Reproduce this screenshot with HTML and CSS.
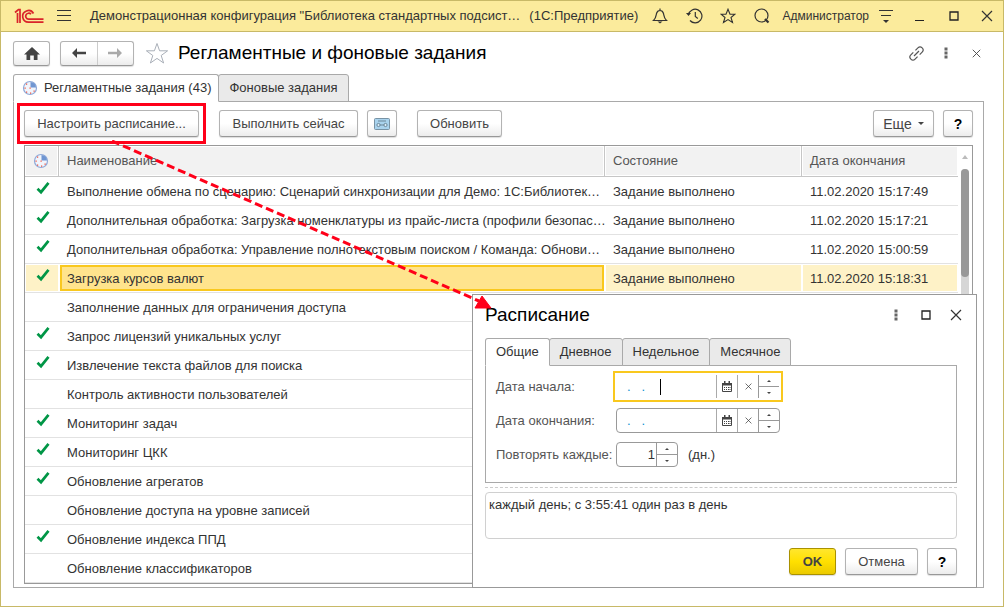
FILE: index.html
```html
<!DOCTYPE html>
<html lang="ru">
<head>
<meta charset="utf-8">
<title>Регламентные и фоновые задания</title>
<link rel="stylesheet" href="styles.css">
</head>
<body>
<svg class="defs" aria-hidden="true">
  <symbol id="check" viewBox="0 0 14 14"><path d="M1.5 7.8 5 11.2 12.5 1.8" fill="none" stroke="#009646" stroke-width="2.7"/></symbol>
  <symbol id="clock" viewBox="0 0 16 16"><circle cx="8" cy="8" r="6.5" fill="#f1f5fc" stroke="#8fa9d8" stroke-width="1.2"/><path d="M8.500 7.500V2a5.500 5.500 0 0 1 5.500 5.500z" fill="#7096d2"/><path d="M4 3.500h1.200v1.200H4zM2.500 7.500h1.200v1.200H2.500zM4 11.500h1.200v1.200H4zM8 12.500h1.200v1.200H8zM11.500 10.500h1.200v1.200h-1.200zM7.500 7.500h1.200v1.200H7.500z" fill="#f0503c"/></symbol>
  <symbol id="calendar" viewBox="0 0 10 11"><path d="M.5 2.500h9v8h-9z" fill="#fff" stroke="#444"/><path d="M0 2h10v2.500H0zM2 0h1.500v2H2zM6.500 0H8v2H6.500z" fill="#444"/><path d="M2 6h1v1H2zM4 6h1v1H4zM6 6h1v1H6zM2 8h1v1H2zM4 8h1v1H4zM6 8h1v1H6zM7.500 6h1v1h-1zM7.500 8h1v1h-1z" fill="#444"/></symbol>
  <symbol id="cross" viewBox="0 0 12 12"><path d="M1 1 11 11M11 1 1 11" fill="none" stroke="currentColor" stroke-width="1.200"/></symbol>
  <symbol id="dots" viewBox="0 0 4 12"><path d="M.5.5h3v3h-3zM.5 4.500h3v3h-3zM.5 8.500h3v3h-3z" fill="#666"/></symbol>
  <symbol id="square" viewBox="0 0 10 10"><path d="M1 1h8v8H1z" fill="none" stroke="#222" stroke-width="1.300"/></symbol>
</svg>
<div class="window">
  <header class="titlebar">
    <svg class="logo" viewBox="0 0 30 16" role="img" aria-label="1С"><g fill="none" stroke="#d9232a" stroke-width="1.700"><path d="M1 4.500 4.500 1.500H6V15M3.500 5V15"/><path d="M19.500 5.500A5.800 5.800 0 1 0 14.500 14.200H29.500"/><path d="M17 6.300A3 3 0 1 0 14.500 11.200H29.500"/></g></svg>
    <button class="tb-btn" aria-label="Меню"><svg width="14" height="12" viewBox="0 0 14 12"><path d="M0 .5h14M0 5.500h14M0 10.500h14" stroke="#333"/></svg></button>
    <div class="app-title"><span>Демонстрационная конфигурация "Библиотека стандартных подсист…</span><span>(1С:Предприятие)</span></div>
    <button class="tb-btn" aria-label="Уведомления"><svg width="16" height="16" viewBox="0 0 16 16"><path d="M1.500 12.500C4 10.500 4 8 4.500 5.500 5 3.500 6.500 2.500 8 2.500s3 1 3.500 3c.5 2.500.5 5 3 7zM8 .5v2" fill="none" stroke="#333" stroke-width="1.200"/><path d="M5.500 13.500h5l-2.500 2z" fill="#333"/></svg></button>
    <button class="tb-btn" aria-label="История"><svg width="17" height="16" viewBox="0 0 17 16"><path d="M2.500 6.500A6.800 6.800 0 1 1 4 12.500M9.300 4v4.500l2.500 2" fill="none" stroke="#333" stroke-width="1.200"/><path d="M0 5h5L2.500 8z" fill="#333"/></svg></button>
    <button class="tb-btn" aria-label="Избранное"><svg width="16" height="16" viewBox="0 0 16 16"><path d="M8 1.200 10 6.200h5l-4 3.300 1.500 5L8 11.600l-4.500 2.900 1.500-5-4-3.300h5z" fill="none" stroke="#333" stroke-width="1.100"/></svg></button>
    <button class="tb-btn" aria-label="Поиск"><svg width="16" height="16" viewBox="0 0 16 16"><circle cx="7.500" cy="7.500" r="6.500" fill="none" stroke="#333" stroke-width="1.200"/><path d="m11 11 3.500 3.500" stroke="#333" stroke-width="2.200"/></svg></button>
    <span class="user">Администратор</span>
    <button class="tb-btn" aria-label="Настройки"><svg width="14" height="14" viewBox="0 0 14 14"><path d="M0 1.500h14M2 6.500h10" stroke="#333"/><path d="M4 11h6l-3 3z" fill="#333"/></svg></button>
    <button class="tb-btn" aria-label="Свернуть"><svg width="10" height="10" viewBox="0 0 10 10"><path d="M0 9.500h9" stroke="#222"/></svg></button>
    <button class="tb-btn" aria-label="Развернуть"><svg width="10" height="10"><use href="#square"/></svg></button>
    <button class="tb-btn last" aria-label="Закрыть"><svg width="12" height="12"><use href="#cross"/></svg></button>
  </header>

  <div class="form-head">
    <button class="btn home" aria-label="Домой"><svg width="16" height="13" viewBox="0 0 16 13"><path d="M8 0 16 7.500H13.500V13H9.800V8.500H6.200V13H2.500V7.500H0z" fill="#444"/></svg></button>
    <div class="nav">
      <button aria-label="Назад"><svg width="14" height="10" viewBox="0 0 14 10"><path d="M0 5 5 0v3.700h9v2.600H5V10z" fill="#444"/></svg></button>
      <button aria-label="Вперед"><svg width="14" height="10" viewBox="0 0 14 10"><path d="M14 5 9 0v3.700H0v2.600h9V10z" fill="#aaa"/></svg></button>
    </div>
    <button class="plain star" aria-label="В избранное"><svg width="24" height="23" viewBox="0 0 24 23"><path d="m12 1.500 2.600 7.300h8L16.200 13.500l2.400 7.500-6.600-4.600L5.400 21l2.400-7.500L1.400 8.800h8z" fill="#fff" stroke="#a9afb8"/></svg></button>
    <h1>Регламентные и фоновые задания</h1>
    <div class="head-tools">
      <button class="plain" aria-label="Ссылка"><svg width="17" height="17" viewBox="0 0 17 17"><g transform="rotate(-45 8.500 8.500)" fill="none" stroke="#555" stroke-width="1.200"><path d="M7 5.500H3.500a3 3 0 0 0 0 6H7M10 5.500h3.500a3 3 0 0 1 0 6H10M5 8.500h7" /></g></svg></button>
      <button class="plain" aria-label="Еще"><svg width="4" height="12"><use href="#dots"/></svg></button>
      <button class="plain" aria-label="Закрыть форму"><svg width="9" height="9"><use href="#cross"/></svg></button>
    </div>
  </div>

  <main class="content">
    <div class="tabs" role="tablist">
      <button class="tab active" role="tab" aria-selected="true"><svg width="16" height="16"><use href="#clock"/></svg>Регламентные задания (43)</button>
      <button class="tab" role="tab" aria-selected="false">Фоновые задания</button>
    </div>
    <section class="panel">
      <div class="toolbar">
        <button class="btn marked">Настроить расписание...</button>
        <button class="btn run">Выполнить сейчас</button>
        <button class="btn icon" aria-label="Журнал"><svg width="16" height="12" viewBox="0 0 16 12"><rect x=".5" y=".5" width="15" height="11" rx="1" fill="#a9d3ee" stroke="#7893a5"/><path d="M4 2.500h8v1H4z" fill="#6b8799"/><path d="M5 7h6" stroke="#6b8799"/><circle cx="4.500" cy="7" r="1.600" fill="#dceffa" stroke="#6b8799"/><circle cx="11.500" cy="7" r="1.600" fill="#dceffa" stroke="#6b8799"/></svg></button>
        <button class="btn refresh">Обновить</button>
        <button class="btn more">Еще<i class="caret"></i></button>
        <button class="btn help">?</button>
      </div>
      <div class="grid">
        <table class="jobs">
          <colgroup><col class="c-mark"><col><col class="c-state"><col class="c-date"></colgroup>
          <thead><tr><th><svg width="16" height="16" role="img" aria-label="Статус"><use href="#clock"/></svg></th><th>Наименование</th><th>Состояние</th><th>Дата окончания</th></tr></thead>
          <tbody>
            <tr><td><svg><use href="#check"/></svg></td><td>Выполнение обмена по сценарию: Сценарий синхронизации для Демо: 1С:Библиотек…</td><td>Задание выполнено</td><td>11.02.2020 15:17:49</td></tr>
            <tr><td><svg><use href="#check"/></svg></td><td>Дополнительная обработка: Загрузка номенклатуры из прайс-листа (профили безопас…</td><td>Задание выполнено</td><td>11.02.2020 15:17:21</td></tr>
            <tr><td><svg><use href="#check"/></svg></td><td>Дополнительная обработка: Управление полнотекстовым поиском / Команда: Обнови…</td><td>Задание выполнено</td><td>11.02.2020 15:00:59</td></tr>
            <tr class="selected"><td><svg><use href="#check"/></svg></td><td>Загрузка курсов валют</td><td>Задание выполнено</td><td>11.02.2020 15:18:31</td></tr>
            <tr><td></td><td>Заполнение данных для ограничения доступа</td><td></td><td></td></tr>
            <tr><td><svg><use href="#check"/></svg></td><td>Запрос лицензий уникальных услуг</td><td></td><td></td></tr>
            <tr><td><svg><use href="#check"/></svg></td><td>Извлечение текста файлов для поиска</td><td></td><td></td></tr>
            <tr><td></td><td>Контроль активности пользователей</td><td></td><td></td></tr>
            <tr><td><svg><use href="#check"/></svg></td><td>Мониторинг задач</td><td></td><td></td></tr>
            <tr><td><svg><use href="#check"/></svg></td><td>Мониторинг ЦКК</td><td></td><td></td></tr>
            <tr><td><svg><use href="#check"/></svg></td><td>Обновление агрегатов</td><td></td><td></td></tr>
            <tr><td></td><td>Обновление доступа на уровне записей</td><td></td><td></td></tr>
            <tr><td><svg><use href="#check"/></svg></td><td>Обновление индекса ППД</td><td></td><td></td></tr>
            <tr><td></td><td>Обновление классификаторов</td><td></td><td></td></tr>
          </tbody>
        </table>
        <div class="scroll"><i class="scroll-up"></i><div class="track"><div class="thumb"></div></div></div>
      </div>
    </section>
  </main>

  <div class="dialog" role="dialog" aria-labelledby="dlg-title">
    <div class="dlg-head">
      <h2 id="dlg-title">Расписание</h2>
      <button class="plain" aria-label="Еще"><svg width="4" height="12"><use href="#dots"/></svg></button>
      <button class="plain" aria-label="Развернуть окно"><svg width="10" height="10"><use href="#square"/></svg></button>
      <button class="plain" aria-label="Закрыть окно"><svg width="12" height="12"><use href="#cross"/></svg></button>
    </div>
    <div class="tabs" role="tablist">
      <button class="tab active" role="tab" aria-selected="true">Общие</button>
      <button class="tab" role="tab" aria-selected="false">Дневное</button>
      <button class="tab" role="tab" aria-selected="false">Недельное</button>
      <button class="tab" role="tab" aria-selected="false">Месячное</button>
    </div>
    <div class="fields">
      <label for="start">Дата начала:</label>
      <div class="field focused"><input class="date" id="start" type="text" value=".   ."><span class="cursor"></span>
        <button aria-label="Календарь"><svg width="10" height="11"><use href="#calendar"/></svg></button><button aria-label="Очистить"><svg width="7" height="7"><use href="#cross"/></svg></button>
        <div class="spin"><button aria-label="Больше"><i class="up"></i></button><button aria-label="Меньше"><i class="down"></i></button></div></div>
      <label for="end">Дата окончания:</label>
      <div class="field"><input class="date" id="end" type="text" value=".   .">
        <button aria-label="Календарь"><svg width="10" height="11"><use href="#calendar"/></svg></button><button aria-label="Очистить"><svg width="7" height="7"><use href="#cross"/></svg></button>
        <div class="spin"><button aria-label="Больше"><i class="up"></i></button><button aria-label="Меньше"><i class="down"></i></button></div></div>
      <label for="every">Повторять каждые:</label>
      <div class="with-unit"><div class="field short"><input class="num" id="every" type="text" value="1">
        <div class="spin"><button aria-label="Больше"><i class="up"></i></button><button aria-label="Меньше"><i class="down"></i></button></div></div><span>(дн.)</span></div>
    </div>
    <hr class="divider">
    <textarea class="summary" aria-label="Описание расписания" readonly>каждый день; с 3:55:41 один раз в день</textarea>
    <div class="dlg-foot">
      <button class="btn ok">OK</button>
      <button class="btn cancel">Отмена</button>
      <button class="btn help">?</button>
    </div>
  </div>

  <svg class="arrow" viewBox="0 0 382 170" aria-hidden="true"><path d="M1 1 368 161" stroke="#ff0019" stroke-width="3" stroke-dasharray="8 4" fill="none"/><path d="M371 156 380 168 364 168z" fill="#ff0019" stroke="#ff0019"/></svg>
</div>
</body>
</html>
```

FILE: styles.css
```css
* { box-sizing: border-box; }
body { margin: 0; font-family: "Liberation Sans", Arial, sans-serif; font-size: 13px; line-height: 16px; color: #333; }
button, input, textarea { font: inherit; color: inherit; margin: 0; }
button { padding: 0; border: 0; background: none; }
svg { display: block; flex: none; }
.defs { position: absolute; width: 0; height: 0; }

.window { position: relative; display: flex; flex-direction: column; min-height: 100vh; background: #fff; border: 1px solid #c8b967; }

.titlebar { display: flex; align-items: center; height: 31px; padding-left: 13px; background: #fbeb9c; border-bottom: 1px solid #c8b967; }
.logo { width: 30px; height: 16px; margin-right: 3px; }
.tb-btn { display: flex; align-items: center; justify-content: center; width: 34px; height: 30px; flex: none; }
.tb-btn.last { width: 32px; }
.app-title { display: flex; flex: 1; gap: 9px; min-width: 0; padding-left: 9px; white-space: nowrap; }
.user { padding: 0 0 0 3px; font-size: 12px; }

.form-head { display: flex; align-items: center; height: 42px; padding: 0 12px; }
.btn { display: flex; align-items: center; justify-content: center; height: 27px; border: 1px solid #b3b3b3; border-bottom-color: #989898; border-radius: 3px; background: linear-gradient(#fff 50%, #ececec); color: #444; box-shadow: 0 1px 1px #ddd; white-space: nowrap; }
.home { width: 37px; height: 25px; margin-right: 10px; }
.nav { display: flex; width: 74px; height: 25px; border: 1px solid #b3b3b3; border-bottom-color: #989898; border-radius: 3px; background: linear-gradient(#fff 50%, #ececec); box-shadow: 0 1px 1px #ddd; }
.nav button { display: flex; flex: 1; align-items: center; justify-content: center; }
.nav button + button { border-left: 1px solid #ccc; }
.plain { display: flex; align-items: center; justify-content: center; width: 30px; height: 30px; }
.star { width: 24px; margin: 0 9px 0 11px; }
h1, h2 { margin: 0; color: #000; font-size: 19px; line-height: 24px; font-weight: 400; }
.head-tools { display: flex; margin-left: auto; color: #444; }

.content { display: flex; flex: 1; flex-direction: column; padding: 0 19px 18px 12px; }
.tabs { display: flex; height: 28px; }
.tab { display: flex; align-items: center; gap: 6px; height: 28px; margin-left: -1px; padding: 0 10px; border: 1px solid #a9a9a9; border-radius: 3px 3px 0 0; background: #eaeaea; white-space: nowrap; }
.tab.active { margin-left: 0; padding: 0 7px 0 8px; background: #fff; border-bottom-color: #fff; z-index: 1; }
.panel { display: flex; flex: 1; flex-direction: column; margin-top: -1px; padding: 8px 10px 3px; border: 1px solid #a9a9a9; }
.toolbar { display: flex; padding-bottom: 8px; }
.marked { position: relative; width: 175px; }
.marked::after { content: ""; position: absolute; inset: -8px; border: 3px solid #ff0019; }
.run { width: 139px; margin-left: 20px; }
.icon { width: 30px; margin-left: 9px; }
.refresh { width: 85px; margin-left: 20px; }
.more { width: 61px; margin: 0 9px 0 auto; gap: 6px; font-size: 14px; }
.help { width: 30px; color: #000; font-size: 14px; font-weight: 700; }
.caret { border: 3px solid transparent; border-top-color: #444; border-bottom: 0; }

.grid { display: flex; flex: 1; border: 1px solid #999; }
.jobs { flex: 1; width: 100%; align-self: flex-start; table-layout: fixed; border-collapse: separate; border-spacing: 0; }
.c-mark { width: 34px; }
.c-state { width: 197px; }
.c-date { width: 156px; }
.jobs th { height: 31px; padding: 0 8px; border-right: 1px solid #c6c6c6; border-bottom: 1px solid #c6c6c6; background: #f2f2f2; box-shadow: inset 0 0 0 1px #fff; color: #555; font-weight: 400; text-align: left; }
.jobs th:last-child { border-right: 0; }
.jobs td { height: 29px; padding: 2px 8px 0; border-bottom: 1px solid #e2e2e2; overflow: hidden; white-space: nowrap; }
.jobs td:first-child { padding: 0 11px 6px; }
.jobs td svg { width: 14px; height: 14px; }
.jobs .selected td { background: #fef2c7; box-shadow: inset 0 0 0 1px #fff; }
.jobs .selected td:nth-child(2) { background: #ffe48d; box-shadow: inset 0 0 0 1px #fff, inset 0 0 0 3px #f9c81e; }
.scroll { display: flex; flex-direction: column; align-items: center; width: 14px; padding: 9px 0 0; }
.scroll-up { border: 3px solid transparent; border-bottom: 4px solid #bbb; border-top: 0; }
.track { flex: 1; width: 8px; margin-top: 10px; border-radius: 4px; background: #d6d6d6; }
.thumb { height: 108px; border-radius: 4px; background: #999; }

.dialog { position: absolute; right: 26px; bottom: 18px; z-index: 2; width: 505px; padding: 0 19px 12px 12px; border: 1px solid #999; background: #fff; }
.dlg-head { display: flex; align-items: center; height: 40px; margin: 0 -14px 3px 0; }
.dlg-head h2 { margin-right: auto; }
.dialog .tab { padding: 0 10px; }
.fields { display: grid; grid-template-columns: 120px 1fr; align-content: start; align-items: center; row-gap: 9px; min-height: 118px; margin-top: -1px; padding: 8px 10px; border: 1px solid #a9a9a9; }
.fields label { color: #555; white-space: nowrap; }
.field { position: relative; display: flex; width: 164px; height: 25px; border: 1px solid #999; border-radius: 4px; }
.field.focused { border-color: transparent; border-radius: 0; outline: 2px solid #f9c81e; outline-offset: 1px; }
.field input { flex: 1; min-width: 0; padding: 0 0 0 10px; border: 0; outline: 0; background: none; }
.field .date { color: #0a8fd0; }
.field .num { padding: 0 1px 0 0; text-align: right; }
.field > button { display: flex; align-items: center; justify-content: center; width: 21px; border-left: 1px solid #aaa; }
.spin { display: flex; flex-direction: column; width: 21px; border-left: 1px solid #999; }
.spin button { display: flex; flex: 1; align-items: center; justify-content: center; }
.spin button + button { border-top: 1px solid #999; }
.up, .down { border: 2px solid transparent; }
.up { border-top: 0; border-bottom-color: #444; }
.down { border-bottom: 0; border-top-color: #444; }
.cursor { position: absolute; left: 43px; top: 4px; width: 1px; height: 16px; background: #000; }
.short { width: 62px; }
.with-unit { display: flex; align-items: center; gap: 10px; }
.divider { height: 0; margin: 4px 0; border: 0; border-top: 1px dashed #ccc; }
.summary { display: block; width: 100%; height: 47px; padding: 4px 3px; border: 1px solid #d0d0d0; border-radius: 4px; resize: none; outline: 0; }
.dlg-foot { display: flex; justify-content: flex-end; gap: 9px; padding-top: 9px; }
.ok { width: 47px; border-color: #a99100; background: linear-gradient(#ffe62e, #ffe000 50%, #ebca00); font-weight: 700; }
.cancel { width: 73px; }

.arrow { position: absolute; left: 110px; top: 139px; z-index: 3; width: 382px; height: 170px; pointer-events: none; }
```
